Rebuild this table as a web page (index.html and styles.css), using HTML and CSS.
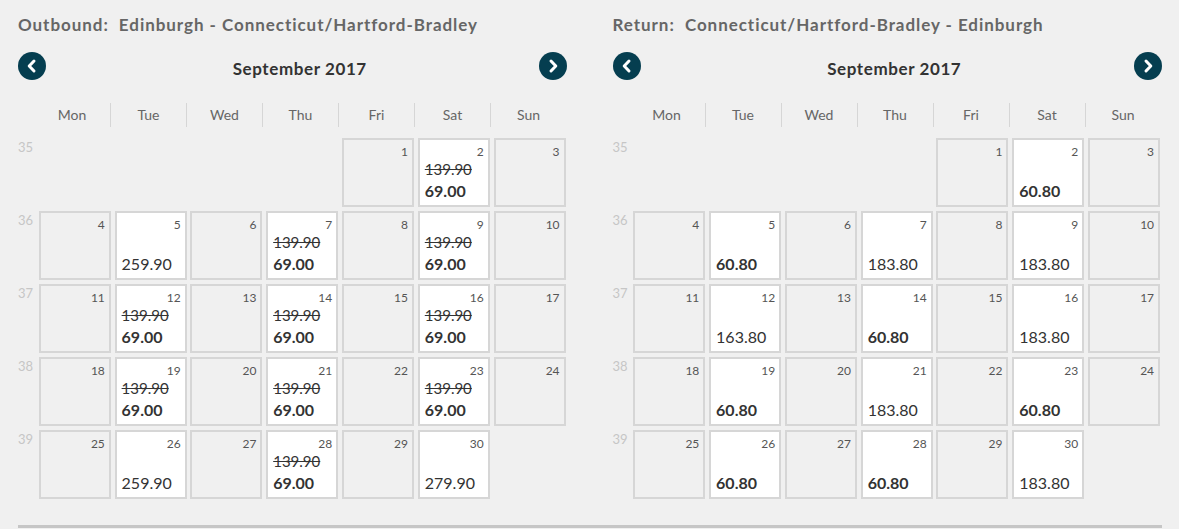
FILE: index.html
```html
<!DOCTYPE html>
<html lang="en">
<head>
    <meta charset="UTF-8">
    <title>Flight calendar</title>
    <link rel="stylesheet" href="styles.css">
</head>
<body>
    <div class="calendars">
        <div class="cal">
            <h2 class="route">Outbound:&nbsp; Edinburgh - Connecticut/Hartford-Bradley</h2>
            <div class="nav">
                <button class="arrow"><svg viewBox="0 0 28 28"><path d="M16 9l-4.8 5 4.8 5"/></svg></button>
                <span class="month">September 2017</span>
                <button class="arrow"><svg viewBox="0 0 28 28"><path d="M12 9l4.8 5-4.8 5"/></svg></button>
            </div>
            <div class="weekdays">
                <span>Mon</span><span>Tue</span><span>Wed</span><span>Thu</span><span>Fri</span><span>Sat</span><span>Sun</span>
            </div>
            <div class="week">
                <span class="wk">35</span>
                <span class="blank"></span><span class="blank"></span><span class="blank"></span><span class="blank"></span>
                <div class="day"><span class="num">1</span></div>
                <div class="day open"><span class="num">2</span><s class="old">139.90</s><b class="price">69.00</b></div>
                <div class="day"><span class="num">3</span></div>
            </div>
            <div class="week">
                <span class="wk">36</span>
                <div class="day"><span class="num">4</span></div>
                <div class="day open"><span class="num">5</span><span class="price">259.90</span></div>
                <div class="day"><span class="num">6</span></div>
                <div class="day open"><span class="num">7</span><s class="old">139.90</s><b class="price">69.00</b></div>
                <div class="day"><span class="num">8</span></div>
                <div class="day open"><span class="num">9</span><s class="old">139.90</s><b class="price">69.00</b></div>
                <div class="day"><span class="num">10</span></div>
            </div>
            <div class="week">
                <span class="wk">37</span>
                <div class="day"><span class="num">11</span></div>
                <div class="day open"><span class="num">12</span><s class="old">139.90</s><b class="price">69.00</b></div>
                <div class="day"><span class="num">13</span></div>
                <div class="day open"><span class="num">14</span><s class="old">139.90</s><b class="price">69.00</b></div>
                <div class="day"><span class="num">15</span></div>
                <div class="day open"><span class="num">16</span><s class="old">139.90</s><b class="price">69.00</b></div>
                <div class="day"><span class="num">17</span></div>
            </div>
            <div class="week">
                <span class="wk">38</span>
                <div class="day"><span class="num">18</span></div>
                <div class="day open"><span class="num">19</span><s class="old">139.90</s><b class="price">69.00</b></div>
                <div class="day"><span class="num">20</span></div>
                <div class="day open"><span class="num">21</span><s class="old">139.90</s><b class="price">69.00</b></div>
                <div class="day"><span class="num">22</span></div>
                <div class="day open"><span class="num">23</span><s class="old">139.90</s><b class="price">69.00</b></div>
                <div class="day"><span class="num">24</span></div>
            </div>
            <div class="week">
                <span class="wk">39</span>
                <div class="day"><span class="num">25</span></div>
                <div class="day open"><span class="num">26</span><span class="price">259.90</span></div>
                <div class="day"><span class="num">27</span></div>
                <div class="day open"><span class="num">28</span><s class="old">139.90</s><b class="price">69.00</b></div>
                <div class="day"><span class="num">29</span></div>
                <div class="day open"><span class="num">30</span><span class="price">279.90</span></div>
            </div>
        </div>

        <div class="cal">
            <h2 class="route">Return:&nbsp; Connecticut/Hartford-Bradley - Edinburgh</h2>
            <div class="nav">
                <button class="arrow"><svg viewBox="0 0 28 28"><path d="M16 9l-4.8 5 4.8 5"/></svg></button>
                <span class="month">September 2017</span>
                <button class="arrow"><svg viewBox="0 0 28 28"><path d="M12 9l4.8 5-4.8 5"/></svg></button>
            </div>
            <div class="weekdays">
                <span>Mon</span><span>Tue</span><span>Wed</span><span>Thu</span><span>Fri</span><span>Sat</span><span>Sun</span>
            </div>
            <div class="week">
                <span class="wk">35</span>
                <span class="blank"></span><span class="blank"></span><span class="blank"></span><span class="blank"></span>
                <div class="day"><span class="num">1</span></div>
                <div class="day open"><span class="num">2</span><b class="price">60.80</b></div>
                <div class="day"><span class="num">3</span></div>
            </div>
            <div class="week">
                <span class="wk">36</span>
                <div class="day"><span class="num">4</span></div>
                <div class="day open"><span class="num">5</span><b class="price">60.80</b></div>
                <div class="day"><span class="num">6</span></div>
                <div class="day open"><span class="num">7</span><span class="price">183.80</span></div>
                <div class="day"><span class="num">8</span></div>
                <div class="day open"><span class="num">9</span><span class="price">183.80</span></div>
                <div class="day"><span class="num">10</span></div>
            </div>
            <div class="week">
                <span class="wk">37</span>
                <div class="day"><span class="num">11</span></div>
                <div class="day open"><span class="num">12</span><span class="price">163.80</span></div>
                <div class="day"><span class="num">13</span></div>
                <div class="day open"><span class="num">14</span><b class="price">60.80</b></div>
                <div class="day"><span class="num">15</span></div>
                <div class="day open"><span class="num">16</span><span class="price">183.80</span></div>
                <div class="day"><span class="num">17</span></div>
            </div>
            <div class="week">
                <span class="wk">38</span>
                <div class="day"><span class="num">18</span></div>
                <div class="day open"><span class="num">19</span><b class="price">60.80</b></div>
                <div class="day"><span class="num">20</span></div>
                <div class="day open"><span class="num">21</span><span class="price">183.80</span></div>
                <div class="day"><span class="num">22</span></div>
                <div class="day open"><span class="num">23</span><b class="price">60.80</b></div>
                <div class="day"><span class="num">24</span></div>
            </div>
            <div class="week">
                <span class="wk">39</span>
                <div class="day"><span class="num">25</span></div>
                <div class="day open"><span class="num">26</span><b class="price">60.80</b></div>
                <div class="day"><span class="num">27</span></div>
                <div class="day open"><span class="num">28</span><b class="price">60.80</b></div>
                <div class="day"><span class="num">29</span></div>
                <div class="day open"><span class="num">30</span><span class="price">183.80</span></div>
            </div>
        </div>
    </div>
    <div class="rule"></div>
</body>
</html>
```

FILE: styles.css
```css
body {
    margin: 0;
    padding: 14px 17px 0 18px;
    background: #f0f0f0;
    font-family: Lato, "Open Sans", sans-serif;
    color: #333;
}
.calendars {
    display: flex;
    gap: 45px;
}
.cal {
    width: 550px;
}
.route {
    margin: 0;
    font-size: 17px;
    line-height: 22px;
    font-weight: 700;
    color: #666;
    letter-spacing: 0.95px;
    white-space: nowrap;
}
.nav {
    display: flex;
    align-items: center;
    justify-content: space-between;
    margin-top: 16px;
    height: 28px;
}
.month {
    margin-left: 14px;
    padding-top: 4px;
    font-size: 17px;
    font-weight: 700;
    letter-spacing: 0.6px;
    color: #333;
}
.arrow {
    width: 28px;
    height: 28px;
    padding: 0;
    border: none;
    border-radius: 50%;
    background: #053e50;
    cursor: pointer;
}
.arrow svg {
    display: block;
    width: 28px;
    height: 28px;
    fill: none;
    stroke: #fff;
    stroke-width: 3;
    stroke-linecap: round;
    stroke-linejoin: round;
}
.weekdays {
    display: grid;
    grid-template-columns: repeat(7, 76px);
    margin: 23px 0 11px 16px;
}
.weekdays span {
    height: 24px;
    line-height: 24px;
    text-align: center;
    font-size: 14px;
    color: #666;
}
.weekdays span + span {
    border-left: 1px solid #d6d6d6;
}
.week {
    display: grid;
    grid-template-columns: 17px repeat(7, 72px);
    column-gap: 3.8px;
    height: 69px;
    margin-bottom: 4px;
}
.wk {
    font-size: 13px;
    color: #c6c6c6;
    line-height: 16px;
    margin-top: 1px;
}
.day {
    display: flex;
    flex-direction: column;
    justify-content: flex-end;
    position: relative;
    box-sizing: border-box;
    border: 2px solid #d6d6d6;
    padding: 0 5px 3px;
    background: #f0f0f0;
}
.day.open {
    background: #fff;
}
.num {
    position: absolute;
    top: 5px;
    right: 4px;
    font-size: 12px;
    line-height: 14px;
    color: #555;
}
.old {
    font-size: 15px;
    line-height: 22px;
    color: #333;
}
.price {
    font-size: 16px;
    line-height: 22px;
    font-weight: 400;
    color: #333;
}
b.price {
    font-weight: 700;
}
.rule {
    height: 3px;
    margin-top: 22px;
    background: #c6c6c6;
    width: 1144px;
}
```
